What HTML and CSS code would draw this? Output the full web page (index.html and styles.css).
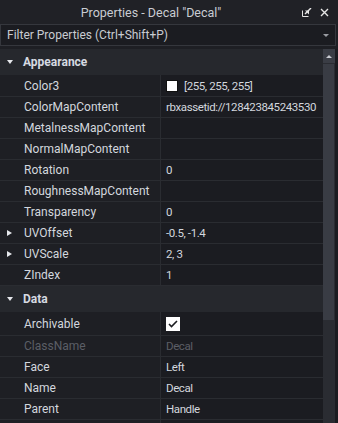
FILE: index.html
```html
<!DOCTYPE html>
<html lang="en">

<head>
  <meta charset="UTF-8">
  <title>Properties - Decal "Decal"</title>
  <link rel="stylesheet" href="styles.css">
</head>

<body>
  <div class="panel">
    <div class="titlebar">
      <div class="title">Properties - Decal "Decal"</div>
      <div class="title_icons">
        <svg width="10" height="9" viewBox="0 0 10 9">
          <path d="M0.5 2.5v6h6" fill="none" stroke="#e6e6e6" stroke-width="1" />
          <path d="M3 6L9 0" stroke="#e6e6e6" stroke-width="1.4" />
          <path d="M2.5 2.5h4v4z" fill="#e6e6e6" transform="translate(0.5 0)" />
        </svg>
        <svg width="9" height="9" viewBox="0 0 9 9">
          <path d="M1 1L8 8M8 1L1 8" stroke="#e6e6e6" stroke-width="1.4" />
        </svg>
      </div>
    </div>

    <div class="filter">
      <span>Filter Properties (Ctrl+Shift+P)</span>
      <span class="drop"></span>
    </div>

    <div class="main">
      <div class="list">
        <div class="section"><span class="tri_down"></span>Appearance</div>
        <div class="row first"><div class="name">Color3</div><div class="value"><span class="swatch"></span>[255, 255, 255]</div></div>
        <div class="row"><div class="name">ColorMapContent</div><div class="value">rbxassetid://128423845243530</div></div>
        <div class="row"><div class="name">MetalnessMapContent</div><div class="value"></div></div>
        <div class="row"><div class="name">NormalMapContent</div><div class="value"></div></div>
        <div class="row"><div class="name">Rotation</div><div class="value">0</div></div>
        <div class="row"><div class="name">RoughnessMapContent</div><div class="value"></div></div>
        <div class="row"><div class="name">Transparency</div><div class="value">0</div></div>
        <div class="row"><div class="name"><span class="tri_right"></span>UVOffset</div><div class="value">-0.5, -1.4</div></div>
        <div class="row"><div class="name"><span class="tri_right"></span>UVScale</div><div class="value">2, 3</div></div>
        <div class="row"><div class="name">ZIndex</div><div class="value">1</div></div>
        <div class="section"><span class="tri_down"></span>Data</div>
        <div class="row tall"><div class="name">Archivable</div><div class="value"><span class="check">
          <svg width="10" height="8" viewBox="0 0 10 8"><path d="M1 4l2.5 2.5L9 1" fill="none" stroke="#1b1c20" stroke-width="1.6" /></svg>
        </span></div></div>
        <div class="row muted"><div class="name">ClassName</div><div class="value">Decal</div></div>
        <div class="row"><div class="name">Face</div><div class="value">Left</div></div>
        <div class="row"><div class="name">Name</div><div class="value">Decal</div></div>
        <div class="row"><div class="name">Parent</div><div class="value">Handle</div></div>
        <div class="row"><div class="name"></div><div class="value"></div></div>
      </div>
      <div class="scrollbar">
        <div class="arrow_btn"><span class="tri_up"></span></div>
        <div class="thumb"></div>
      </div>
    </div>
  </div>
</body>

</html>
```

FILE: styles.css
```css
body {
  margin: 0;
  background-color: #1c1d22;
  font-family: Roboto, "Liberation Sans", sans-serif;
  font-size: 12px;
  color: #d3d7de;
}

.panel {
  width: 338px;
  height: 423px;
  overflow: hidden;
  background-color: #1e1f24;
}

.titlebar {
  height: 24px;
  display: flex;
  align-items: center;
  background-color: #202126;
}

.title {
  flex: 1;
  text-align: center;
  color: #c9ccd2;
  font-size: 12.5px;
}

.title_icons {
  box-sizing: border-box;
  width: 36px;
  display: flex;
  align-items: center;
  gap: 8px;
  padding-right: 9px;
}

.filter {
  height: 20px;
  border: 1px solid #35373d;
  background-color: #1b1c21;
  display: flex;
  align-items: center;
  justify-content: space-between;
  padding: 0 6px;
  margin-right: 2px;
  color: #c9ccd2;
}

.drop {
  width: 0;
  height: 0;
  border-left: 3px solid transparent;
  border-right: 3px solid transparent;
  border-top: 3px solid #9a9ca2;
}

.main {
  display: flex;
  margin-top: 3px;
}

.list {
  width: 323px;
}

.section {
  height: 26px;
  display: flex;
  align-items: center;
  padding-left: 7px;
  background-color: #26282d;
  font-weight: bold;
  color: #d6dae1;
}

.tri_down {
  width: 0;
  height: 0;
  border-left: 3.5px solid transparent;
  border-right: 3.5px solid transparent;
  border-top: 4px solid #e6e8ec;
  margin-right: 10px;
}

.tri_right {
  position: absolute;
  left: -17px;
  top: 7px;
  width: 0;
  height: 0;
  border-top: 3.5px solid transparent;
  border-bottom: 3.5px solid transparent;
  border-left: 5px solid #e6e8ec;
}

.row {
  height: 20px;
  display: grid;
  grid-template-columns: 161px 1fr;
  border-bottom: 1px solid #2a2c31;
}

.row.first {
  height: 21px;
}

.row.tall {
  height: 23px;
}

.name {
  position: relative;
  margin-left: 24px;
  display: flex;
  align-items: center;
  border-right: 1px solid #2a2c31;
}

.value {
  display: flex;
  align-items: center;
  padding-left: 5px;
  background-color: #1b1c21;
  font-size: 11.5px;
  letter-spacing: -0.4px;
  white-space: nowrap;
}

.muted .name,
.muted .value {
  color: #5b5e66;
}

.swatch {
  width: 10px;
  height: 10px;
  background-color: #ffffff;
  border: 1px solid #111;
  margin-right: 6px;
}

.check {
  width: 14px;
  height: 14px;
  background-color: #ffffff;
  display: flex;
  align-items: center;
  justify-content: center;
}

.scrollbar {
  width: 12px;
  height: 374px;
  background-color: #2a2c32;
  border-right: 3px solid #1b1c21;
}

.arrow_btn {
  height: 14px;
  background-color: #3a3d45;
  display: flex;
  align-items: center;
  justify-content: center;
}

.tri_up {
  width: 0;
  height: 0;
  border-left: 3px solid transparent;
  border-right: 3px solid transparent;
  border-bottom: 3px solid #c9ccd2;
}

.thumb {
  height: 256px;
  margin: 1px 1px 0 0;
  background-color: #393c44;
}
```
